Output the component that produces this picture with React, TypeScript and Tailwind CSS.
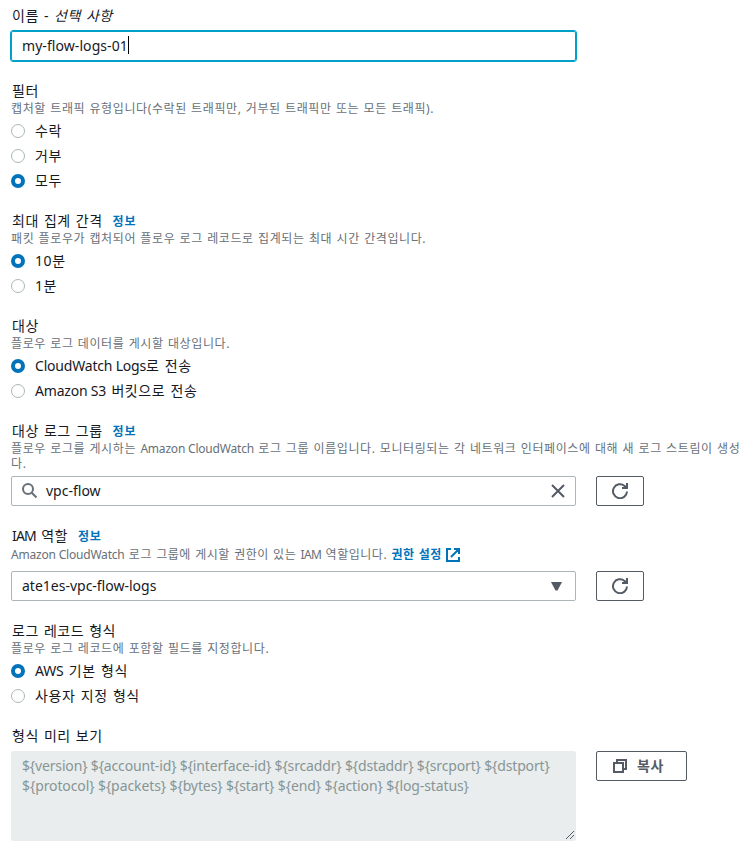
import type { ReactNode } from "react";

function Label({ children, info }: { children: ReactNode; info?: boolean }) {
  return (
    <div className="flex h-5 items-center gap-[10px] pt-px pl-px text-[14px] leading-5 tracking-[0.5px] whitespace-nowrap [word-spacing:1px]">
      <span>{children}</span>
      {info && (
        <a href="#" className="pt-[2px] text-[12px] font-bold tracking-[0.8px] text-[#0073bb]">
          정보
        </a>
      )}
    </div>
  );
}

function Description({ children }: { children: ReactNode }) {
  return (
    <div className="mt-px text-[12px] leading-[15px] tracking-[0.6px] whitespace-nowrap text-[#687078] [word-spacing:0.6px]">
      {children}
    </div>
  );
}

// Latin runs inside Korean text keep their own, tighter spacing
function Latin({ children }: { children: ReactNode }) {
  return <span className="tracking-[-0.2px] [word-spacing:0]">{children}</span>;
}

interface Option {
  id: string;
  label: ReactNode;
}

function RadioGroup({ options, selected }: { options: Option[]; selected: string }) {
  return (
    <div className="mt-[3px] mb-4">
      {options.map((option) => (
        <label key={option.id} className="flex h-[25px] items-start">
          <span
            className={
              option.id === selected
                ? "mt-[5px] size-[14px] rounded-full border-4 border-[#0073bb] bg-white"
                : "mt-[5px] size-[14px] rounded-full border border-[#aab7b8] bg-white"
            }
          />
          <span className="ml-[10px] text-[14px] leading-[23px] tracking-[0.6px] whitespace-nowrap [word-spacing:1px]">
            {option.label}
          </span>
        </label>
      ))}
    </div>
  );
}

function RefreshButton() {
  return (
    <button className="ml-5 flex h-[30px] w-12 items-center justify-center rounded-[2px] border border-[#545b64] bg-white">
      <svg width="16" height="16" viewBox="0 0 16 16" fill="none" stroke="#545b64" strokeWidth="2">
        <path d="M15 8.5A7 7 0 1 1 12.6 2.9L14 4.2" />
        <path d="M16 0v6h-6V4h2.5L14 2.5V0z" fill="#545b64" stroke="none" />
      </svg>
    </button>
  );
}

export default function App() {
  return (
    <div className="h-[842px] w-[741px] overflow-hidden bg-white pt-[5px] pl-[11px] font-['Noto_Sans','Noto_Sans_CJK_KR',sans-serif] text-[#16191f]">
      <Label>
        이름 - <i>선택 사항</i>
      </Label>
      <div className="mt-[6px] mb-[19px] flex h-[30px] w-[565px] items-center rounded-[2px] border border-[#00a1c9] pb-[2px] pl-[10px] text-[14px] tracking-[0.07px] outline outline-[#00a1c9]">
        <span>my-flow-logs-01</span>
        <span className="h-[18px] w-px bg-black" />
      </div>

      <Label>필터</Label>
      <Description>
        캡처할 트래픽 유형입니다(수락된 트래픽만, 거부된 트래픽만 또는 모든 트래픽).
      </Description>
      <RadioGroup
        selected="all"
        options={[
          { id: "accept", label: "수락" },
          { id: "reject", label: "거부" },
          { id: "all", label: "모두" },
        ]}
      />

      <Label info>최대 집계 간격</Label>
      <Description>
        패킷 플로우가 캡처되어 플로우 로그 레코드로 집계되는 최대 시간 간격입니다.
      </Description>
      <RadioGroup
        selected="10m"
        options={[
          { id: "10m", label: "10분" },
          { id: "1m", label: "1분" },
        ]}
      />

      <Label>대상</Label>
      <Description>플로우 로그 데이터를 게시할 대상입니다.</Description>
      <RadioGroup
        selected="cloudwatch"
        options={[
          {
            id: "cloudwatch",
            label: (
              <>
                <Latin>CloudWatch Logs</Latin>로 전송
              </>
            ),
          },
          {
            id: "s3",
            label: (
              <>
                <Latin>Amazon S3</Latin> 버킷으로 전송
              </>
            ),
          },
        ]}
      />

      <Label info>대상 로그 그룹</Label>
      <Description>
        플로우 로그를 게시하는 <Latin>Amazon CloudWatch</Latin> 로그 그룹 이름입니다. 모니터링되는
        각 네트워크 인터페이스에 대해 새 로그 스트림이 생성됩니
        <br />
        다.
      </Description>
      <div className="mt-[5px] mb-[19px] flex">
        <div className="flex h-[30px] w-[565px] items-center rounded-[2px] border border-[#aab7b8] pr-[9px] pl-[10px] text-[14px]">
          <svg width="16" height="16" viewBox="0 0 16 16" fill="none" stroke="#687078" strokeWidth="2">
            <circle cx="6" cy="6" r="5" />
            <path d="M9.7 9.7L14.5 14.5" />
          </svg>
          <span className="ml-2 pb-[2px]">vpc-flow</span>
          <svg className="ml-auto" width="16" height="16" viewBox="0 0 16 16" stroke="#545b64" strokeWidth="2">
            <path d="M2 2l12 12M14 2L2 14" />
          </svg>
        </div>
        <RefreshButton />
      </div>

      <Label info>
        <span className="tracking-[-0.8px]">IAM</span> 역할
      </Label>
      <div className="pt-px [word-spacing:0]">
        <Description>
          <Latin>Amazon CloudWatch</Latin>
          <span className="tracking-[0.53px]">
            {" "}
            로그 그룹에 게시할 권한이 있는 <span className="tracking-[-0.6px]">IAM</span> 역할입니다.{" "}
          </span>
          <a href="#" className="font-bold tracking-[0.5px] text-[#0073bb]">
            권한 설정
            <svg className="ml-1 inline-block align-[-3px]" width="14" height="14" viewBox="0 0 14 14" fill="none" stroke="#0073bb" strokeWidth="2">
              <path d="M5 1H1v12h12V9M8 1h5v5M13 1L5 9" />
            </svg>
          </a>
        </Description>
      </div>
      <div className="mt-[9px] mb-[19px] flex">
        <div className="flex h-[30px] w-[565px] items-center justify-between rounded-[2px] border border-[#aab7b8] pr-[13px] pl-[10px] text-[14px]">
          <span className="pb-[2px]">ate1es-vpc-flow-logs</span>
          <svg width="11" height="9" viewBox="0 0 11 9" fill="#545b64">
            <path d="M0 0h11L6.5 8.5h-2z" />
          </svg>
        </div>
        <RefreshButton />
      </div>

      <Label>로그 레코드 형식</Label>
      <Description>플로우 로그 레코드에 포함할 필드를 지정합니다.</Description>
      <RadioGroup
        selected="default"
        options={[
          {
            id: "default",
            label: (
              <>
                <Latin>AWS</Latin> 기본 형식
              </>
            ),
          },
          { id: "custom", label: "사용자 지정 형식" },
        ]}
      />

      <Label>형식 미리 보기</Label>
      <div className="mt-[6px] flex items-start">
        <div className="flex h-[90px] w-[565px] rounded-[2px] bg-[#eaeded] pt-[5px] pl-[11px] text-[14px] leading-5 whitespace-nowrap text-[#879596]">
          <div>
            <div className="tracking-[-0.155px]">
              {"${version} ${account-id} ${interface-id} ${srcaddr} ${dstaddr} ${srcport} ${dstport}"}
            </div>
            <div className="tracking-[-0.1px]">
              {"${protocol} ${packets} ${bytes} ${start} ${end} ${action} ${log-status}"}
            </div>
          </div>
          <svg className="mr-[2px] mb-[2px] ml-auto self-end" width="8" height="8" viewBox="0 0 8 8" stroke="#545b64">
            <path d="M0 8L8 0M4 8L8 4" />
          </svg>
        </div>
        <button className="ml-5 flex h-[30px] w-[91px] items-center rounded-[2px] border border-[#545b64] bg-white pl-4 text-[14px] font-bold tracking-[0.5px] text-[#545b64]">
          <svg width="14" height="14" viewBox="0 0 14 14" fill="none" stroke="#545b64" strokeWidth="2">
            <path d="M1 4h9v9H1zM4 4V1h9v9h-3" />
          </svg>
          <span className="ml-[10px] pb-[2px]">복사</span>
        </button>
      </div>
    </div>
  );
}
